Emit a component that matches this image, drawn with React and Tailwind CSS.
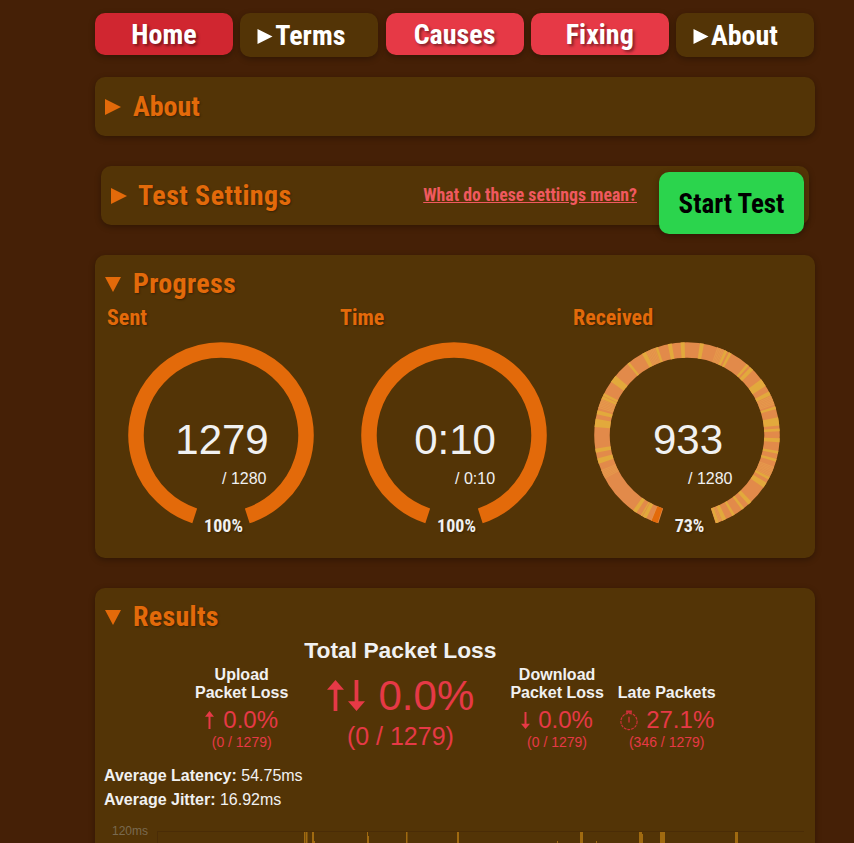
const display = "font-['Liberation_Sans_Narrow','Roboto_Condensed','DejaVu_Sans_Condensed',sans-serif] font-bold"
const panelShadow = 'shadow-[0_2px_6px_rgba(0,0,0,0.3)]'
const headingShadow = '[text-shadow:1px_1px_2px_rgba(0,0,0,0.35)]'

function Triangle({ open, className }) {
  return (
    <svg viewBox="0 0 16 16" className={className}>
      <polygon points={open ? '0,1 16,1 8,16' : '0,0 16,8 0,16'} fill="currentColor" />
    </svg>
  )
}

function NavButton({ label, home }) {
  return (
    <a className={`flex h-[42px] w-[138px] items-center justify-center rounded-[10px] pt-[2px] text-[28px] text-white [text-shadow:2px_2px_3px_rgba(0,0,0,0.45)] ${panelShadow} ${display} ${home ? 'bg-[#d02630]' : 'bg-[#e63946]'}`}>
      {label}
    </a>
  )
}

function NavDropdown({ label }) {
  return (
    <div className={`flex h-[44px] w-[138px] items-center gap-[2px] rounded-[10px] bg-[#533406] pl-[17px] pt-[2px] text-[28px] text-white ${panelShadow} ${display}`}>
      <Triangle className="h-[15px] w-[16px]" />
      <span>{label}</span>
    </div>
  )
}

function arcPath(startDeg, endDeg, r) {
  // angles measured clockwise from straight down
  const point = (deg) => {
    const a = (deg * Math.PI) / 180
    return `${100 - r * Math.sin(a)} ${100 + r * Math.cos(a)}`
  }
  const large = endDeg - startDeg > 180 ? 1 : 0
  return `M ${point(startDeg)} A ${r} ${r} 0 ${large} 1 ${point(endDeg)}`
}

// [angle, width in px] of the late packets on the received ring
const yellowStripes = [
  [26, 3], [29, 1], [33, 3], [72, 4], [79, 3], [95, 6], [103, 3], [113, 2], [115, 2], [125, 4], [128, 2], [140, 2],
  [151, 3], [160, 2], [168, 3], [176, 3], [188, 3], [204, 2], [207, 2], [220, 2], [223, 3], [233, 6], [242, 3],
  [252, 2], [259, 6], [266, 2], [272, 3], [280, 2], [285, 2], [297, 2], [301, 4], [316, 3], [322, 2], [329, 2],
  [335, 3], [340, 2],
]

const faintStripes = Array.from({ length: 46 }, (_, i) => 22 + ((i * 137) % 320))

function Gauge({ label, value, total, percent, striped }) {
  return (
    <div className="w-[233px]">
      <div className={`pl-[2px] pt-[1px] text-[22px] leading-[24px] text-[#e36a0a] ${headingShadow} ${display}`}>{label}</div>
      <div className="relative mt-[5px] ml-[16px] h-[200px] w-[200px]">
        <svg viewBox="0 0 200 200" className="h-[200px] w-[200px]" fill="none">
          <path d={arcPath(18, 342, 85)} stroke={striped ? '#e28a4a' : '#e36a0a'} strokeWidth="15.5" />
          {striped &&
            faintStripes.map((at) => (
              <path key={at} d={arcPath(at, at + 0.8, 85)} stroke="#e5984c" strokeWidth="15.5" />
            ))}
          {striped &&
            yellowStripes.map(([at, width]) => (
              <path key={at} d={arcPath(at, at + width * 0.85, 85)} stroke="#e2a93c" strokeWidth="15.5" />
            ))}
          {striped && <path d={arcPath(18.5, 22.5, 85)} stroke="#e36a0a" strokeWidth="15.5" />}
        </svg>
        <div className="absolute inset-x-0 top-[81px] pl-[2px] text-center text-[42px] leading-[48px] text-[#f1f1f1]">{value}</div>
        <div className="absolute left-[101px] top-[135px] w-[60px] whitespace-nowrap text-[16px] leading-[18px] text-[#f1f1f1]">/ {total}</div>
        <div className={`absolute inset-x-0 top-[180px] pl-[5px] text-center text-[18px] leading-[22px] text-[#f1f1f1] ${headingShadow} ${display}`}>{percent}</div>
      </div>
    </div>
  )
}

function Arrow({ down, className }) {
  return (
    <svg viewBox="0 0 18 32" preserveAspectRatio="none" className={className}>
      <polygon
        points={down ? '7,0 11,0 11,22 18,22 9,32 0,22 7,22' : '7,32 11,32 11,10 18,10 9,0 0,10 7,10'}
        fill="currentColor"
      />
    </svg>
  )
}

function Stopwatch() {
  return (
    <svg viewBox="0 0 20 22" className="h-[21px] w-[20px] text-[#d0303a]" fill="none" stroke="currentColor">
      <rect x="7" y="0.5" width="6" height="2.5" fill="currentColor" stroke="none" />
      <circle cx="10" cy="12" r="8.5" strokeWidth="1.2" strokeDasharray="3 1" />
      <line x1="10" y1="7" x2="10" y2="13" strokeWidth="1.4" />
    </svg>
  )
}

function Stat({ title, icon, gap, value, detail }) {
  return (
    <div className="mb-[1px] flex flex-col items-center text-center">
      <div className="text-[16px] font-bold leading-[18px] text-[#f1f1f1]">
        {title.map((line) => (
          <div key={line}>{line}</div>
        ))}
      </div>
      <div className={`mt-[4px] flex items-center text-[24px] leading-[28px] text-[#e63946] ${gap}`}>
        {icon}
        <span>{value}</span>
      </div>
      <div className="text-[14px] leading-[16px] text-[#e63946]">{detail}</div>
    </div>
  )
}

const chartBars = [
  [304, 1.5, 0], [306, 1.5, 0], [312, 2, 0], [314, 1, 9], [367, 1, 0], [368, 1, 4], [406, 1.5, 0], [457, 2, 0],
  [557, 1, 9], [580, 3, 0], [596, 1, 9], [639, 3, 0], [642, 1, 2], [660, 5, 0], [735, 3, 0],
]

function App() {
  return (
    <div className="h-screen overflow-hidden bg-[#452006] font-['Liberation_Sans',Arial,sans-serif]">
      <div className="ml-[95px] w-[720px] pt-[13px]">
        <nav className="flex items-start justify-between pr-[1px]">
          <NavButton label="Home" home />
          <NavDropdown label="Terms" />
          <NavButton label="Causes" />
          <NavButton label="Fixing" />
          <NavDropdown label="About" />
        </nav>

        <section className={`mt-[20px] flex h-[59px] items-center rounded-[10px] bg-[#533406] pl-[10px] text-[#e36a0a] ${panelShadow}`}>
          <Triangle className="h-[16px] w-[16px]" />
          <h2 className={`ml-[12px] text-[28px] ${headingShadow} ${display}`}>About</h2>
        </section>

        <div className="mt-[30px] px-[6px]">
          <section className={`flex h-[59px] items-center rounded-[10px] bg-[#533406] pl-[10px] text-[#e36a0a] ${panelShadow}`}>
            <Triangle className="h-[16px] w-[16px]" />
            <h2 className={`ml-[11px] text-[28px] tracking-[0.4px] ${headingShadow} ${display}`}>Test Settings</h2>
            <a className={`ml-auto text-[17.8px] text-[#f0595f] underline ${display}`}>What do these settings mean?</a>
            <button className={`relative top-[7px] ml-[22px] mr-[5px] h-[62px] w-[145px] rounded-[10px] bg-[#2bd44d] pt-[3px] text-[27px] text-black ${panelShadow} ${display}`}>
              Start Test
            </button>
          </section>
        </div>

        <section className={`mt-[30px] h-[303px] rounded-[10px] bg-[#533406] pl-[10px] pt-[14px] text-[#e36a0a] ${panelShadow}`}>
          <div className="flex h-[30px] items-center">
            <Triangle open className="h-[16px] w-[16px]" />
            <h2 className={`ml-[12px] text-[28px] tracking-[0.3px] ${headingShadow} ${display}`}>Progress</h2>
          </div>
          <div className="mt-[6px] flex">
            <Gauge label="Sent" value="1279" total="1280" percent="100%" />
            <Gauge label="Time" value="0:10" total="0:10" percent="100%" />
            <Gauge label="Received" value="933" total="1280" percent="73%" striped />
          </div>
        </section>

        <section className={`mt-[30px] h-[400px] rounded-[10px] bg-[#533406] pl-[10px] pt-[14px] text-[#e36a0a] ${panelShadow}`}>
          <div className="flex h-[30px] items-center">
            <Triangle open className="h-[16px] w-[16px]" />
            <h2 className={`ml-[12px] text-[28px] tracking-[0.3px] ${headingShadow} ${display}`}>Results</h2>
          </div>

          <div className="flex items-end pl-[90px]">
            <Stat
              title={['Upload', 'Packet Loss']}
              icon={<Arrow className="h-[18px] w-[9px]" />}
              gap="gap-[9px]"
              value="0.0%"
              detail="(0 / 1279)"
            />
            <div className="ml-[7px] mt-[5px] flex w-[210px] flex-col items-center">
              <div className="whitespace-nowrap text-[22.8px] font-bold leading-[26px] text-[#f1f1f1]">Total Packet Loss</div>
              <div className="mt-[8px] flex h-[48px] items-center text-[42px] text-[#e63946]">
                <Arrow className="h-[31px] w-[17px]" />
                <Arrow down className="ml-[4px] h-[31px] w-[17px]" />
                <span className="ml-[14px]">0.0%</span>
              </div>
              <div className="mt-[2px] text-[25px] leading-[30px] text-[#e63946]">(0 / 1279)</div>
            </div>
            <div className="ml-[5px]">
              <Stat
                title={['Download', 'Packet Loss']}
                icon={<Arrow down className="h-[17px] w-[9px]" />}
                gap="gap-[8px]"
                value="0.0%"
                detail="(0 / 1279)"
              />
            </div>
            <div className="ml-[14px]">
              <Stat title={['Late Packets']} icon={<Stopwatch />} gap="gap-[7px]" value="27.1%" detail="(346 / 1279)" />
            </div>
          </div>

          <div className="mt-[13px] ml-[-1px] text-[16px] leading-[24px] text-[#f1f1f1]">
            <div><b>Average Latency:</b> 54.75ms</div>
            <div><b>Average Jitter:</b> 16.92ms</div>
          </div>

          <svg viewBox="0 0 710 20" className="mt-[13px] h-[20px] w-[710px]">
            <text x="7" y="9.5" fontSize="12" fill="#7a6a50">120ms</text>
            <line x1="52" y1="6.5" x2="699" y2="6.5" stroke="#4a2c06" strokeWidth="1" />
            <line x1="52.5" y1="6" x2="52.5" y2="20" stroke="#4a2c06" strokeWidth="1" />
            {chartBars.map(([x, w, drop]) => (
              <rect key={x} x={x - 105} y={7 + drop} width={w} height={13 - drop} fill="#a06a10" />
            ))}
          </svg>
        </section>
      </div>
    </div>
  )
}

export default App
